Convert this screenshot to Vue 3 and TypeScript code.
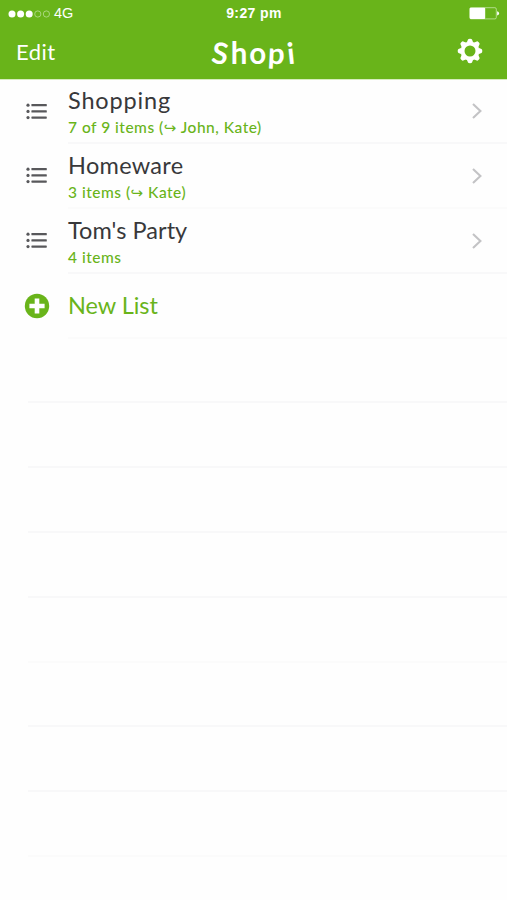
<script setup lang="ts">
interface ShoppingList {
  name: string
  count: string
  shared: string
  fit: string
}

const lists: ShoppingList[] = [
  { name: 'Shopping', count: '7 of 9 items', shared: 'John, Kate', fit: 'fit-wide' },
  { name: 'Homeware', count: '3 items', shared: 'Kate', fit: 'fit-medium' },
  { name: "Tom's Party", count: '4 items', shared: '', fit: 'fit-tight' },
]
const emptyRows = 8
const teeth = [0, 45, 90, 135, 180, 225, 270, 315]
const logo = ['S', 'h', 'o', 'p', 'i']
</script>

<template>
  <div class="screen">
    <header class="top">
      <div class="status">
        <div class="carrier">
          <svg class="signal" width="43" height="10" viewBox="0 0 43 10">
            <circle cx="4" cy="5" r="3.5" fill="#fff" />
            <circle cx="12.6" cy="5" r="3.5" fill="#fff" />
            <circle cx="21.2" cy="5" r="3.5" fill="#fff" />
            <circle cx="29.8" cy="5" r="3.1" class="hollow" />
            <circle cx="38.4" cy="5" r="3.1" class="hollow" />
          </svg>
          <span class="network">4G</span>
        </div>
        <span class="time">9:27 pm</span>
        <svg class="battery" width="31" height="13" viewBox="0 0 31 13">
          <rect x=".7" y=".7" width="26.6" height="11.2" rx="1.4" fill="none" stroke="#c4e6a4" stroke-width=".8" />
          <rect x=".8" y=".8" width="15.4" height="11.2" rx="1" fill="#fff" />
          <path d="M28.1 4.3q2 .5 2 2.1t-2 2.1z" fill="#fff" />
        </svg>
      </div>
      <nav class="bar">
        <span class="edit">Edit</span>
        <h1 class="logo"><span v-for="c in logo" :key="c" :class="'l-' + c">{{ c }}</span></h1>
        <svg class="gear" width="26" height="26" viewBox="-13 -13 26 26">
          <circle r="7.45" fill="none" stroke="#fff" stroke-width="3.9" />
          <path
            v-for="a in teeth"
            :key="a"
            d="M-3.2-8.4 -2-11.5Q-1.7-12.3 0-12.3T2-11.5L3.2-8.4z"
            fill="#fff"
            :transform="`rotate(${a})`"
          />
        </svg>
      </nav>
    </header>

    <main class="rows">
      <div v-for="list in lists" :key="list.name" class="row">
        <div class="lead">
          <svg width="22" height="17" viewBox="0 0 22 17" fill="#58585b">
            <circle cx="2" cy="2.2" r="1.6" />
            <circle cx="2" cy="8.4" r="1.6" />
            <circle cx="2" cy="14.6" r="1.6" />
            <rect x="5.4" y="1" width="15.4" height="2.3" rx=".6" />
            <rect x="5.4" y="7.2" width="15.4" height="2.3" rx=".6" />
            <rect x="5.4" y="13.4" width="15.4" height="2.3" rx=".6" />
          </svg>
        </div>
        <div class="body">
          <div class="texts">
            <span class="name" :class="list.fit">{{ list.name }}</span>
            <span class="count">{{ list.count }}<template v-if="list.shared"> (<span class="arrow">↪</span> {{ list.shared }})</template></span>
          </div>
          <svg class="chevron" width="12" height="18" viewBox="0 0 12 18">
            <path d="M2 2l7.4 7L2 16" fill="none" stroke="#c3c3c5" stroke-width="2.1" />
          </svg>
        </div>
      </div>

      <div class="row">
        <div class="lead">
          <svg width="26" height="26" viewBox="0 0 26 26">
            <circle cx="13" cy="13" r="12.2" fill="#69b41a" />
            <path d="M13 5.4v15.2M5.4 13h15.2" stroke="#fff" stroke-width="4.6" />
          </svg>
        </div>
        <div class="body">
          <span class="name new">New List</span>
        </div>
      </div>

      <div v-for="n in emptyRows" :key="n" class="row empty"><div class="body"></div></div>
    </main>
  </div>
</template>

<style>
body {
  background: #fefefe;
}
</style>

<style scoped>
.screen {
  width: 507px;
  height: 900px;
  overflow: hidden;
  background: #fefefe;
  font-family: Lato, 'Liberation Sans', sans-serif;
}
.top {
  height: 78.5px;
  background: #69b41a;
  border-bottom: 1px solid #d6ecbd;
  color: #fff;
}
.status {
  display: grid;
  grid-template-columns: 1fr auto 1fr;
  align-items: center;
  height: 27px;
  padding: 0 7px 0 8px;
  font-family: 'Liberation Sans', sans-serif;
  font-size: 14px;
  line-height: 27px;
}
.carrier {
  display: flex;
  align-items: center;
  gap: 3px;
}
.network {
  font-size: 14.5px;
}
.hollow {
  fill: none;
  stroke: #b9df96;
  stroke-width: 0.8;
}
.time {
  font-weight: 700;
  font-size: 14px;
  letter-spacing: 0.4px;
}
.battery {
  justify-self: end;
}
.bar {
  display: grid;
  grid-template-columns: 1fr auto 1fr;
  align-items: center;
  height: 49px;
  padding: 0 24px 0 16px;
}
.edit {
  font-size: 22px;
  letter-spacing: 0.5px;
}
.logo {
  display: flex;
  gap: 2px;
  margin: 3px 0 0 8px;
  font-size: 29.5px;
  line-height: 46px;
  font-weight: 700;
}
.l-S {
  transform: rotate(9deg);
}
.l-p {
  transform: rotate(3deg);
}
.l-i {
  transform: rotate(-6deg);
}
.gear {
  justify-self: end;
  margin-top: -1px;
}
.row {
  display: flex;
  height: 64.8px;
}
.lead {
  display: flex;
  flex: none;
  align-items: center;
  justify-content: center;
  box-sizing: border-box;
  width: 68px;
  padding: 0 0 1.5px 6.5px;
}
.body {
  display: flex;
  flex: 1;
  align-items: center;
  justify-content: space-between;
  box-sizing: border-box;
  padding-right: 24px;
  border-bottom: 2px solid #f8f8f9;
}
.row:nth-child(2) .body,
.row:nth-child(4) .body,
.row:nth-child(9) .body,
.row:nth-child(12) .body {
  border-bottom-color: #fbfbfb;
}
.chevron {
  margin-top: 1px;
}
.empty {
  padding-left: 28px;
}
.texts {
  display: flex;
  flex-direction: column;
  padding-top: 5px;
}
.name {
  font-size: 23.5px;
  line-height: 28px;
  color: #38383a;
}
.fit-wide {
  letter-spacing: 0.85px;
}
.fit-medium {
  letter-spacing: 0.3px;
}
.fit-tight {
  letter-spacing: 0.05px;
}
.new {
  color: #69b41a;
  letter-spacing: -0.05px;
}
.count {
  font-size: 15.5px;
  line-height: 26px;
  font-weight: 500;
  color: #69b41a;
  letter-spacing: 0.5px;
}
.arrow {
  font-family: 'DejaVu Sans', sans-serif;
  font-size: 15px;
}
</style>
